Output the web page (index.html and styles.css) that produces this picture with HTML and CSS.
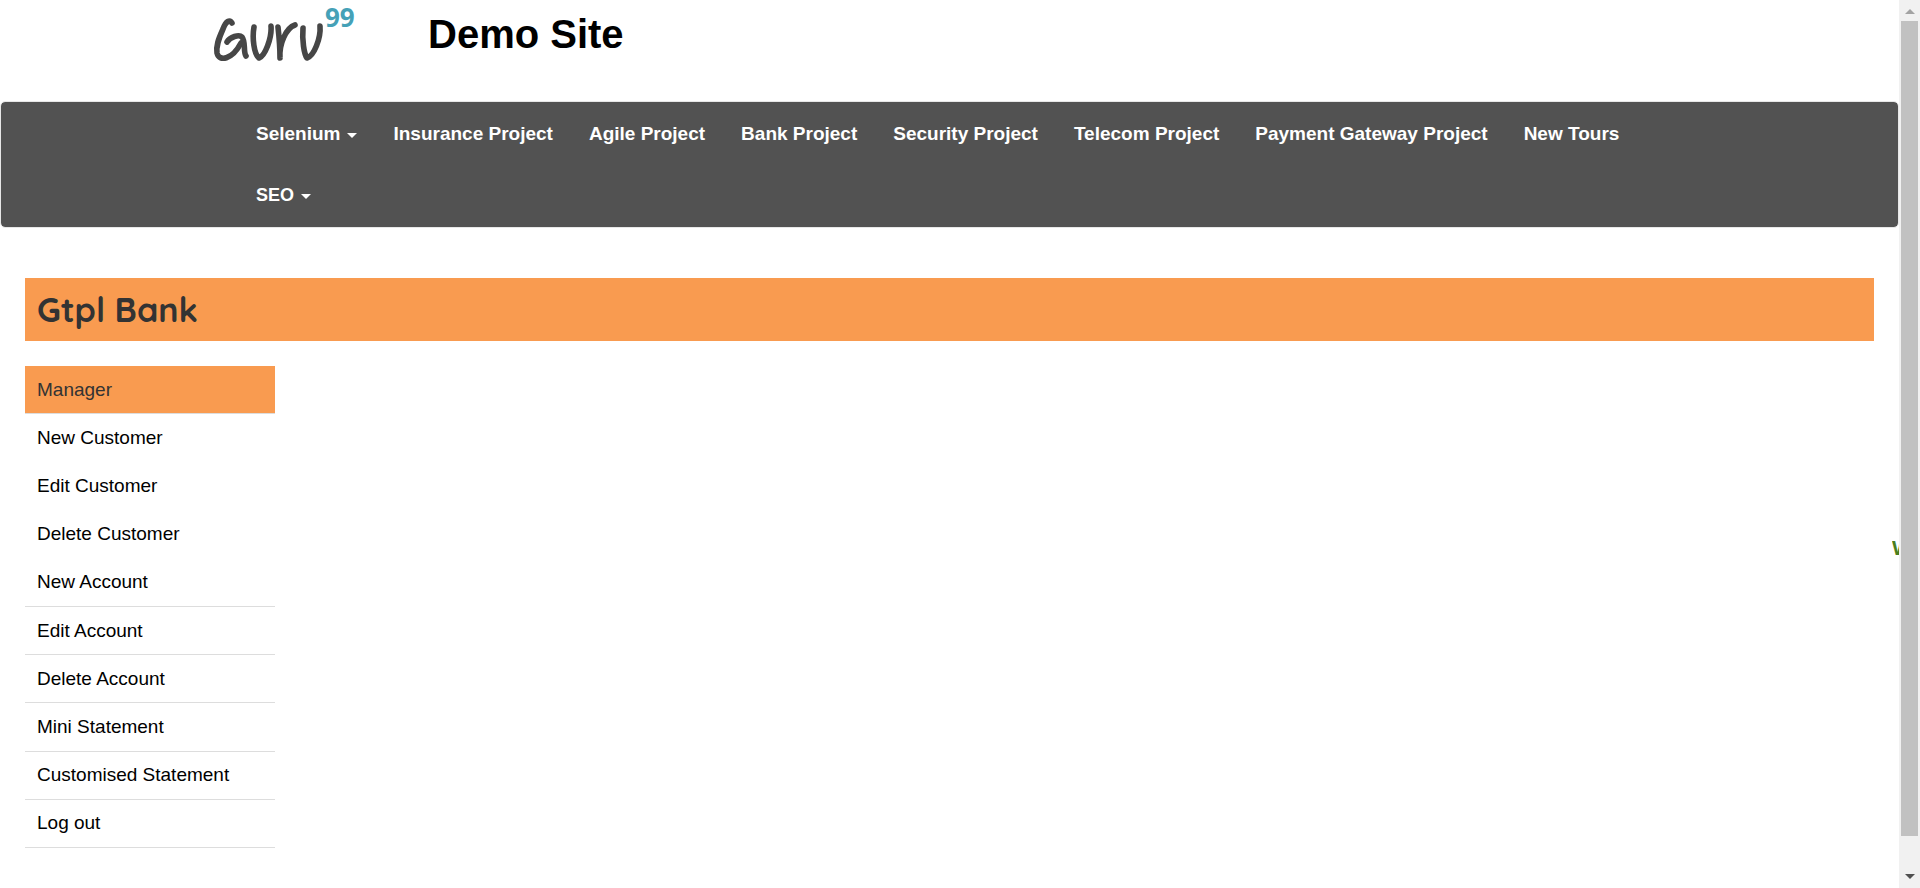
FILE: index.html
```
<!DOCTYPE html>
<html lang="en">
<head>
<meta charset="utf-8">
<title>Gtpl Bank Manager HomePage</title>
<link rel="stylesheet" href="styles.css">
</head>
<body>
<div class="window">
  <div class="page">
    <header class="site-header">
      <svg class="logo" width="144" height="64" viewBox="0 0 144 64" role="img" aria-label="Guru">
        <g fill="none" stroke="#464646" stroke-width="5.6" stroke-linecap="round" stroke-linejoin="round">
          <path d="M20 23C18 19 14 21 11 29C6 40 4 46 5 53C7 62 20 60 29 43"/>
          <path d="M15 42C18 37 27 34 30 37C34 42 31 52 34 56"/>
          <path d="M42 27C40 38 42 54 47 58C53 56 60 38 59 26"/>
          <path d="M66 27C67 36 68 48 68 58C67 44 74 28 83 25"/>
          <path d="M91 28C90 40 92 54 95 58C102 56 109 38 108 26"/>
        </g>
        <text class="logo-sup" x="113" y="27">99</text>
      </svg>
      <h2 class="site-title">Demo Site</h2>
    </header>
    <nav class="navbar">
      <ul class="nav-list">
        <li><a href="#">Selenium<span class="caret"></span></a></li>
        <li><a href="#">Insurance Project</a></li>
        <li><a href="#">Agile Project</a></li>
        <li><a href="#">Bank Project</a></li>
        <li><a href="#">Security Project</a></li>
        <li><a href="#">Telecom Project</a></li>
        <li><a href="#">Payment Gateway Project</a></li>
        <li><a href="#">New Tours</a></li>
        <li><a class="small" href="#">SEO<span class="caret"></span></a></li>
      </ul>
    </nav>
    <h1 class="bank-title">Gtpl Bank</h1>
    <main class="content">
      <ul class="menu">
        <li><a class="active" href="#">Manager</a></li>
        <li><a class="plain" href="#">New Customer</a></li>
        <li><a class="plain" href="#">Edit Customer</a></li>
        <li><a class="plain" href="#">Delete Customer</a></li>
        <li><a href="#">New Account</a></li>
        <li><a href="#">Edit Account</a></li>
        <li><a href="#">Delete Account</a></li>
        <li><a href="#">Mini Statement</a></li>
        <li><a href="#">Customised Statement</a></li>
        <li><a href="#">Log out</a></li>
      </ul>
      <p class="ticker">W</p>
    </main>
  </div>
  <div class="scrollbar" aria-hidden="true">
    <span class="arrow up"></span>
    <span class="thumb"></span>
    <span class="arrow down"></span>
  </div>
</div>
</body>
</html>
```
FILE: styles.css
```
* { box-sizing: border-box; }
body {
  margin: 0;
  background: #fff;
  color: #000;
  font-family: "Liberation Sans", Arial, sans-serif;
  font-size: 19px;
}
ul { list-style: none; margin: 0; padding: 0; }
a { color: inherit; text-decoration: none; }
.window {
  display: flex;
  height: 100vh;
  overflow: hidden;
}
.page { flex: 1; min-width: 0; }

.site-header {
  display: flex;
  align-items: flex-start;
  gap: 72px;
  height: 101px;
  padding-left: 212px;
}
.logo { display: block; overflow: visible; }
.logo-sup {
  font-family: "Open Sans", sans-serif;
  font-size: 26px;
  font-weight: 700;
  fill: #45a1b7;
}
.site-title {
  margin: 12px 0 0;
  font-size: 40px;
  line-height: 44px;
}

.navbar {
  padding: 1px 237px 2px;
  background: #525252;
  background-clip: padding-box;
  border: 1px solid #e7e7e7;
  border-radius: 5px;
}
.nav-list {
  display: flex;
  flex-wrap: wrap;
}
.nav-list a {
  display: flex;
  align-items: center;
  height: 62px;
  padding: 0 18px;
  color: #fff;
  font-weight: bold;
}
.nav-list .small {
  height: 60px;
  font-size: 18px;
}
.caret {
  margin-left: 7px;
  margin-top: 3px;
  border: 5px solid transparent;
  border-top-color: #fff;
  border-bottom: 0;
}

.bank-title {
  margin: 50px 25px 25px;
  padding: 0 12px;
  background: #f99b50;
  color: #333;
  font-family: Quicksand, Lato, sans-serif;
  font-size: 34px;
  font-weight: 700;
  line-height: 63px;
}
.content {
  display: flex;
  justify-content: space-between;
  padding-left: 25px;
}
.menu {
  display: grid;
  grid-auto-rows: 1fr;
  width: 250px;
  min-height: 482px;
}
.menu a {
  display: flex;
  align-items: center;
  height: 100%;
  padding: 0 12px;
  border-bottom: 1px solid #ddd;
}
.menu .plain { border-bottom-color: transparent; }
.menu .active {
  background: #f99b50;
  background-clip: padding-box;
  color: #333;
}
.ticker {
  width: 7px;
  height: 24px;
  margin: 170px 0 0;
  overflow: hidden;
  color: #4a7f1f;
  font-size: 21px;
  font-weight: bold;
  line-height: 24px;
}

.scrollbar {
  display: flex;
  flex-direction: column;
  align-items: center;
  justify-content: space-between;
  width: 21px;
  padding: 9px 0;
  background: #f1f1f1;
}
.thumb {
  flex: 1;
  width: 17px;
  margin: 7px 0 38px;
  background: #c1c1c1;
}
.arrow { border: 5px solid transparent; }
.up { border-top: 0; border-bottom-color: #a3a3a3; }
.down { border-bottom: 0; border-top-color: #505050; }
```
